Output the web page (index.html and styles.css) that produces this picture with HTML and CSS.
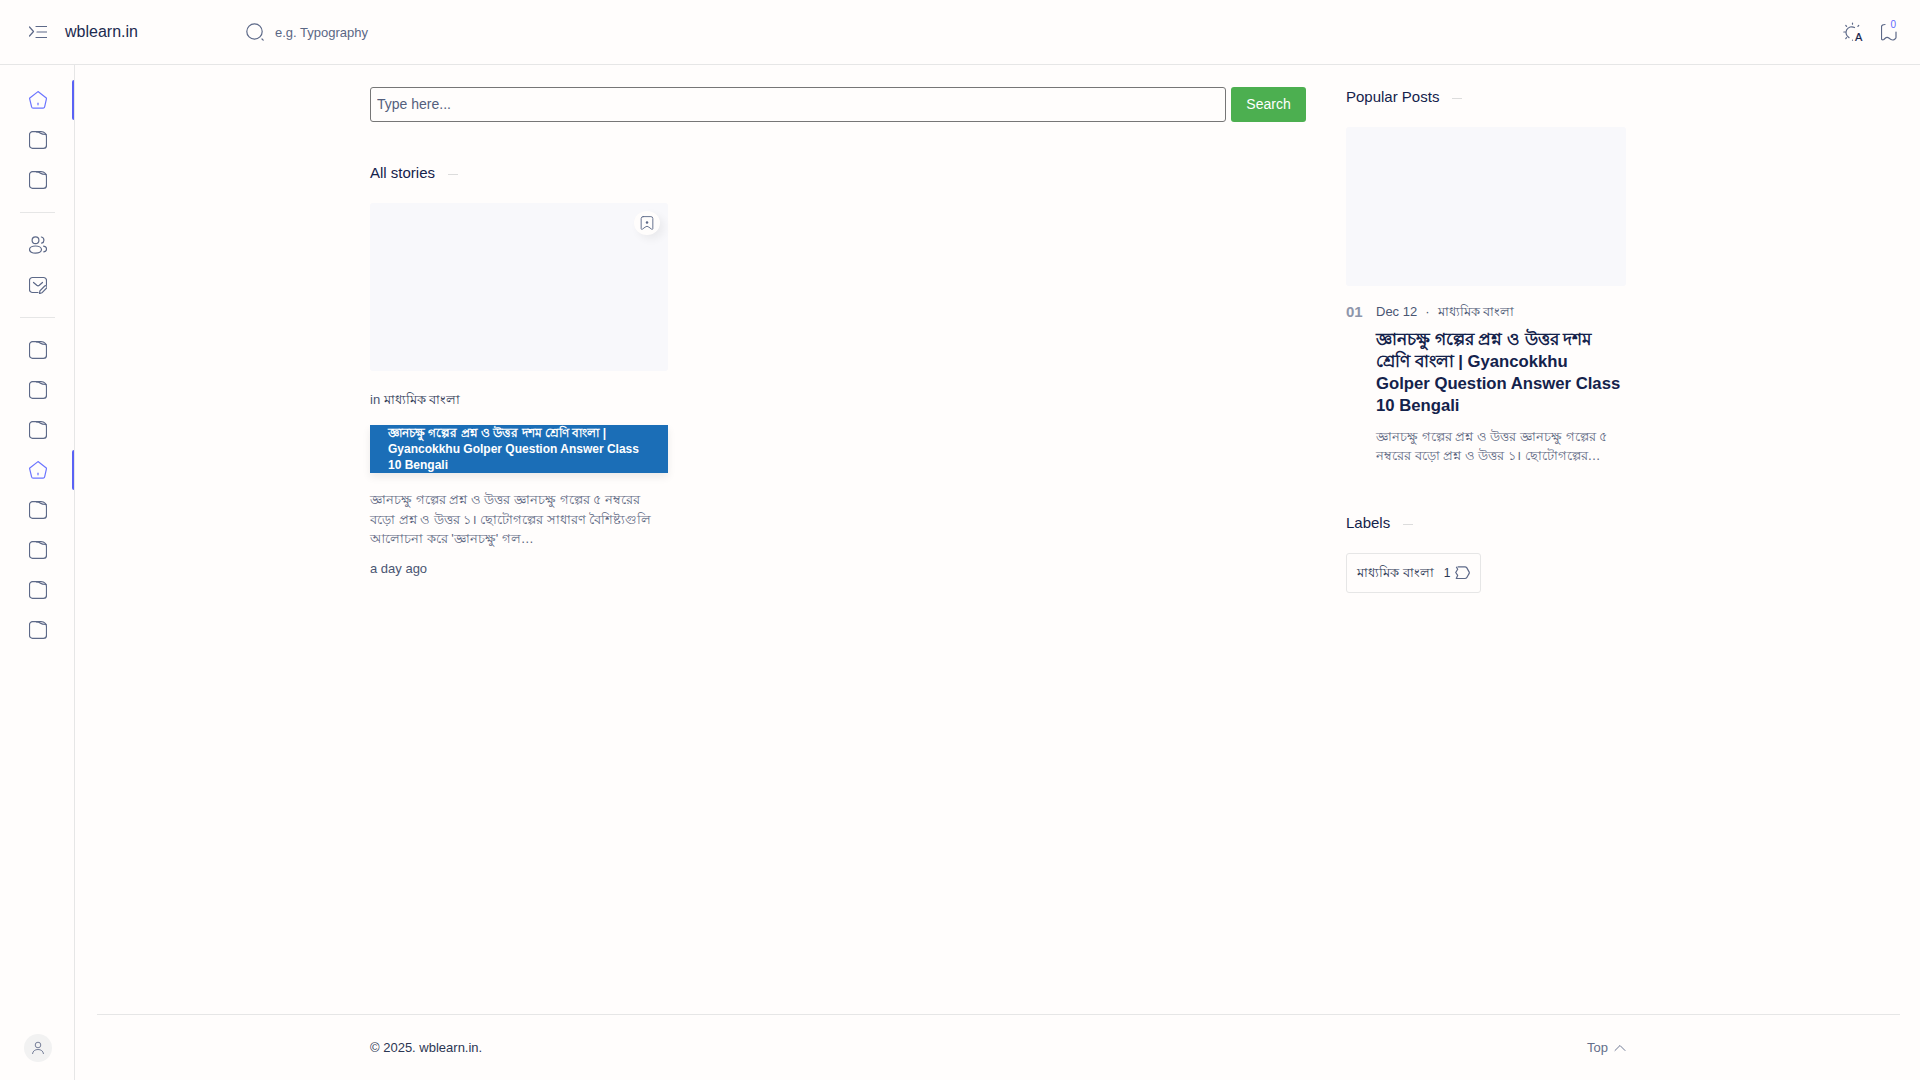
FILE: index.html
```html
<!DOCTYPE html>
<html lang="en">
<head>
  <meta charset="UTF-8">
  <meta name="viewport" content="width=device-width, initial-scale=1.0">
  <title>wblearn.in</title>
  <link rel="stylesheet" href="styles.css">
</head>
<body>

  <svg class="icon-defs" width="0" height="0">
    <symbol id="i-home" viewBox="0 0 18 18"><path d="M9 .6 17.300 7a.6.6 0 0 1 .2.6l-1.800 8a1.600 1.600 0 0 1-1.500 1.600H4.200a1.600 1.600 0 0 1-1.600-1.400L.6 7.600A.6.6 0 0 1 .8 7Z"/><path d="M9 12.200v1.600"/></symbol>
    <symbol id="i-folder" viewBox="0 0 18 18"><path d="M3.500.7H12c2 0 3 .4 4 1.500 1 1 1.500 2 1.500 3.500v8.600a3 3 0 0 1-3 3h-11a3 3 0 0 1-3-3V3.700a3 3 0 0 1 3-3Z"/><path d="M7.500.9c1.800 0 3 .5 4 1.300 1 .9 2.500 1.300 5.700 1.300"/></symbol>
    <symbol id="i-users" viewBox="0 0 18 18"><circle cx="6.500" cy="4.200" r="3.400"/><ellipse cx="6.500" cy="13.600" rx="6" ry="3.600"/><path d="M12.400 1a3.200 3.200 0 0 1 .2 6.200M14.600 10.200c2 .4 3 1.600 3 2.800s-1 2.400-2.800 2.900"/></symbol>
    <symbol id="i-mail" viewBox="0 -1 18 18"><path d="M17.500 8V3.500a3 3 0 0 0-3-3h-11a3 3 0 0 0-3 3v9a3 3 0 0 0 3 3h5.500"/><path d="m4.500 5.500 3.300 2.800a2 2 0 0 0 2.500 0l3.200-2.800"/><path d="m10.500 16.600.4-2.800 4.800-4.800a1.400 1.400 0 0 1 2 2l-4.800 4.800Z"/></symbol>
    <symbol id="i-bookmark" viewBox="0 0 18 18"><path d="M4 .8h10a2.500 2.500 0 0 1 2.500 2.500v13c0 .9-.8 1.200-1.500.7l-3.500-2.600a3.500 3.500 0 0 0-5 0L3 17c-.7.5-1.500.2-1.500-.7v-13A2.500 2.500 0 0 1 4 .8Z"/></symbol>
  </svg>

  <header class="topbar">
    <button class="menu-btn" aria-label="Menu">
      <svg class="icon" width="18" height="18" viewBox="0 0 18 18"><path d="m.5 4 4 4.500-4 4.500M7 3.500h10.500M8 9h9.500M7 14.500h10.500"/></svg>
    </button>
    <a class="logo" href="#">wblearn.in</a>
    <div class="top-search">
      <svg class="icon" width="18" height="18" viewBox="0 0 18 18"><circle cx="8.500" cy="8.500" r="7.700"/><path d="m16 16 1.200 1.200"/></svg>
      <span>e.g. Typography</span>
    </div>
    <div class="top-actions">
      <svg class="icon" width="20" height="20" viewBox="0 0 20 20"><path d="M11.500 5.500A5.500 5.500 0 0 0 6 15.600M9.500 1v1.200M2.800 3.500l.8.800M15.700 3.500l-.8.800M.8 10H2M2.800 16.500l.8-.8M9.500 18v.2" /><text class="theme-a" x="12" y="19">A</text></svg>
      <span class="saved">
        <svg class="icon" width="16" height="18" viewBox="0 0 16 18"><path d="M4 1.500C1.500 1.500.5 2.500.5 4v11.500c0 1.400 1.300 1.700 2.300 1 1.700-1.400 2.800-3.200 5-1.500 2 1.700 3.400 2.700 5 1.700 1.300-.7 2.200-.8 2.200-2.200V9"/></svg>
        <b>0</b>
      </span>
    </div>
  </header>

  <div class="page">
    <aside class="sidenav">
      <nav class="nav-list">
        <a class="nav-item active" href="#"><svg class="icon"><use href="#i-home"/></svg></a>
        <a class="nav-item" href="#"><svg class="icon"><use href="#i-folder"/></svg></a>
        <a class="nav-item" href="#"><svg class="icon"><use href="#i-folder"/></svg></a>
        <hr class="nav-sep">
        <a class="nav-item" href="#"><svg class="icon"><use href="#i-users"/></svg></a>
        <a class="nav-item" href="#"><svg class="icon"><use href="#i-mail"/></svg></a>
        <hr class="nav-sep">
        <a class="nav-item" href="#"><svg class="icon"><use href="#i-folder"/></svg></a>
        <a class="nav-item" href="#"><svg class="icon"><use href="#i-folder"/></svg></a>
        <a class="nav-item" href="#"><svg class="icon"><use href="#i-folder"/></svg></a>
        <a class="nav-item active" href="#"><svg class="icon"><use href="#i-home"/></svg></a>
        <a class="nav-item" href="#"><svg class="icon"><use href="#i-folder"/></svg></a>
        <a class="nav-item" href="#"><svg class="icon"><use href="#i-folder"/></svg></a>
        <a class="nav-item" href="#"><svg class="icon"><use href="#i-folder"/></svg></a>
        <a class="nav-item" href="#"><svg class="icon"><use href="#i-folder"/></svg></a>
      </nav>
      <div class="avatar">
        <svg width="14" height="14" viewBox="0 0 14 14"><circle cx="7" cy="4" r="2.800"/><path d="M1.500 13c.3-3 2.500-4.500 5.500-4.500s5.200 1.500 5.500 4.500"/></svg>
      </div>
    </aside>

    <div class="main">
      <div class="content">
        <section class="stories">
          <form class="search-form">
            <input class="search-input" type="text" placeholder="Type here...">
            <button class="search-btn" type="button">Search</button>
          </form>

          <h2 class="section-title">All stories</h2>

          <article class="card">
            <div class="thumb card-thumb">
              <span class="save-btn"><svg class="icon" width="14" height="14"><use href="#i-bookmark"/><path class="save-dot" d="M7 6.500h.01"/></svg></span>
            </div>
            <div class="card-label">in <a href="#">মাধ্যমিক বাংলা</a></div>
            <h3 class="card-title">জ্ঞানচক্ষু গল্পের প্রশ্ন ও উত্তর দশম শ্রেণি বাংলা | Gyancokkhu Golper Question Answer Class 10 Bengali</h3>
            <p class="card-text">জ্ঞানচক্ষু গল্পের প্রশ্ন ও উত্তর জ্ঞানচক্ষু গল্পের ৫ নম্বরের বড়ো প্রশ্ন ও উত্তর ১। ছোটোগল্পের সাধারণ বৈশিষ্ট্যগুলি আলোচনা করে 'জ্ঞানচক্ষু' গল…</p>
            <time class="card-time">a day ago</time>
          </article>
        </section>

        <aside class="widgets">
          <h2 class="section-title first">Popular Posts</h2>
          <div class="thumb popular-thumb"></div>
          <div class="popular-post">
            <span class="post-num">01</span>
            <div class="post-body">
              <div class="post-meta"><span>Dec 12</span><i>·</i><span>মাধ্যমিক বাংলা</span></div>
              <h3 class="post-title">জ্ঞানচক্ষু গল্পের প্রশ্ন ও উত্তর দশম শ্রেণি বাংলা | Gyancokkhu Golper Question Answer Class 10 Bengali</h3>
              <p class="post-text">জ্ঞানচক্ষু গল্পের প্রশ্ন ও উত্তর জ্ঞানচক্ষু গল্পের ৫ নম্বরের বড়ো প্রশ্ন ও উত্তর ১। ছোটোগল্পের…</p>
            </div>
          </div>

          <h2 class="section-title labels-title">Labels</h2>
          <a class="label-chip" href="#">
            <span>মাধ্যমিক বাংলা</span>
            <em>1</em>
            <svg class="icon" width="15" height="14" viewBox="0 0 15 14"><path d="M3 .8h7c.8 0 1.300.3 1.700.8l2.500 4.500c.2.500.2.800 0 1.300l-2.500 4.300c-.4.600-.9.800-1.700.8H1.300l1.400-3.200L.7 6.500l2-3.200L1.500 1.200"/></svg>
          </a>
        </aside>
      </div>

      <footer class="footer">
        <div class="footer-inner">
          <span>© 2025. wblearn.in.</span>
          <a class="to-top" href="#">Top
            <svg class="icon" width="12" height="8" viewBox="0 0 12 8"><path d="m1 6.500 5-5 5 5"/></svg>
          </a>
        </div>
      </footer>
    </div>
  </div>

</body>
</html>
```

FILE: styles.css
```css
* {
  box-sizing: border-box;
}

body {
  margin: 0;
  height: 100vh;
  display: flex;
  flex-direction: column;
  overflow: hidden;
  background-color: #fffdfc;
  color: #14224b;
  font-family: 'Liberation Sans', 'Noto Sans', sans-serif;
  font-size: 14px;
}

a {
  color: inherit;
  text-decoration: none;
}

.icon-defs {
  position: absolute;
}

.icon {
  width: 18px;
  height: 18px;
  fill: none;
  stroke: #5d6988;
  stroke-width: 1.2;
  stroke-linecap: round;
  stroke-linejoin: round;
}

/* Top bar */
.topbar {
  height: 65px;
  flex: none;
  display: flex;
  align-items: center;
  padding: 0 23px 0 29px;
  border-bottom: 1px solid #e6e6e6;
}

.menu-btn {
  width: 18px;
  height: 18px;
  padding: 0;
  border: 0;
  background: none;
  margin-top: -1px;
}

.logo {
  margin-left: 18px;
  width: 181px;
  font-size: 16px;
  color: #1c2a50;
  margin-top: -1px;
}

.top-search {
  display: flex;
  align-items: center;
  gap: 11px;
  font-size: 13px;
  color: #5b6785;
}

.top-actions {
  margin-left: auto;
  display: flex;
  align-items: center;
  gap: 18px;
}

.top-actions > .icon {
  width: 20px;
  height: 20px;
}

.theme-a {
  font-size: 11px;
  font-weight: 400;
  fill: #14224b;
  stroke: #14224b;
  stroke-width: 0.2;
}

.saved {
  position: relative;
  display: flex;
}

.saved .icon {
  width: 16px;
  height: 18px;
}

.saved b {
  position: absolute;
  top: -4px;
  right: 1px;
  font-size: 10px;
  font-weight: 400;
  color: #5f6bff;
}

/* Left rail */
.page {
  flex: 1;
  min-height: 0;
  display: flex;
}

.sidenav {
  width: 75px;
  flex: none;
  display: flex;
  flex-direction: column;
  justify-content: space-between;
  border-right: 1px solid #e6e6e6;
  padding: 15px 0 18px;
}

.nav-item {
  position: relative;
  display: flex;
  align-items: center;
  height: 40px;
  padding-left: 29px;
}

.nav-item.active .icon {
  stroke: #6b74ff;
}

.nav-item.active::after {
  content: "";
  position: absolute;
  right: 0;
  top: 0;
  width: 2px;
  height: 40px;
  border-radius: 2px 0 0 2px;
  background: #5a62f5;
}

.nav-sep {
  width: 35px;
  height: 1px;
  margin: 12px 0 12px 20px;
  border: 0;
  background: #e6e6e6;
}

.avatar {
  width: 28px;
  height: 28px;
  margin-left: 24px;
  border-radius: 50%;
  background: #f2f2f2;
  display: flex;
  align-items: center;
  justify-content: center;
}

.avatar svg {
  fill: none;
  stroke: #767f99;
  stroke-width: 1;
}

/* Main area */
.main {
  flex: 1;
  min-width: 0;
  display: flex;
  flex-direction: column;
  justify-content: space-between;
}

.content {
  display: flex;
  gap: 40px;
  padding: 22px 0 0 295px;
}

.stories {
  width: 936px;
}

.search-form {
  display: flex;
  gap: 5px;
  height: 35px;
}

.search-input {
  flex: 1;
  min-width: 0;
  padding: 0 6px 2px;
  border: 1px solid #767676;
  border-radius: 3px;
  background: none;
  font: 14px 'Liberation Sans', sans-serif;
}

.search-input::placeholder {
  color: #545f7d;
  opacity: 1;
}

.search-btn {
  width: 75px;
  padding: 0 0 2px;
  border: 0;
  border-radius: 3px;
  background: #4caf50;
  color: #fff;
  font: 14px 'Liberation Sans', sans-serif;
}

.section-title {
  display: flex;
  align-items: center;
  margin: 0;
  font-size: 15px;
  font-weight: 400;
  line-height: 20px;
}

.section-title::after {
  content: "";
  width: 10px;
  height: 1px;
  margin: 2px 0 0 13px;
  background: #dcdcdc;
}

.stories .section-title {
  margin-top: 41px;
}

.thumb {
  background: #f8f8fb;
  border-radius: 3px;
}

/* Story card */
.card {
  width: 298px;
  margin-top: 20px;
}

.card-thumb {
  position: relative;
  height: 168px;
}

.save-btn {
  position: absolute;
  top: 8px;
  right: 8px;
  width: 26px;
  height: 24px;
  border-radius: 50%;
  background: #fffdfc;
  box-shadow: 4px 4px 8px rgba(0, 0, 0, 0.06);
  display: flex;
  align-items: center;
  justify-content: center;
}

.save-btn .icon {
  width: 14px;
  height: 14px;
}

.save-dot {
  stroke-width: 2.5;
}

.card-label {
  margin-top: 19px;
  font-size: 13px;
  line-height: 20px;
  color: #4a5572;
}

.card-label a {
  font-size: 13px;
  color: #2c3653;
}

.card-title {
  margin: 15px 0 0;
  padding: 0 18px;
  height: 48px;
  background: #1b6eb7;
  box-shadow: 0 4px 8px rgba(0, 0, 0, 0.08);
  color: #fff;
  font-size: 12px;
  font-weight: 700;
  line-height: 16px;
  overflow: hidden;
}

.card-text {
  margin: 17px 0 0;
  font-size: 13px;
  line-height: 19.5px;
  color: #5c6680;
}

.card-time {
  display: block;
  margin-top: 12px;
  font-size: 13px;
  line-height: 16px;
  color: #4a5572;
}

/* Right column */
.widgets {
  width: 280px;
}

.popular-thumb {
  height: 159px;
  margin-top: 20px;
}

.popular-post {
  display: flex;
  margin-top: 16px;
}

.post-num {
  width: 30px;
  flex: none;
  font-size: 15px;
  font-weight: 700;
  line-height: 20px;
  color: #8e96ab;
}

.post-meta {
  display: flex;
  align-items: center;
  gap: 8px;
  font-size: 13px;
  line-height: 20px;
  color: #4a5572;
}

.post-meta i {
  font-style: normal;
}

.post-title {
  margin: 7px 0 0;
  font-size: 16.7px;
  font-weight: 700;
  line-height: 22px;
}

.post-text {
  margin: 10px 0 0;
  font-size: 13px;
  line-height: 19px;
  color: #5c6680;
}

.labels-title {
  margin-top: 48px;
}

.label-chip {
  display: inline-flex;
  align-items: center;
  height: 40px;
  margin-top: 20px;
  padding: 0 10px;
  border: 1px solid #e6e6e6;
  border-radius: 3px;
  font-size: 13px;
  color: #2c3653;
}

.label-chip em {
  margin-left: 10px;
  font-size: 12px;
  font-style: normal;
}

.label-chip .icon {
  width: 15px;
  height: 14px;
  margin-left: 5px;
}

/* Footer */
.footer {
  margin: 0 20px 0 22px;
  height: 66px;
  border-top: 1px solid #e6e6e6;
}

.footer-inner {
  display: flex;
  justify-content: space-between;
  align-items: center;
  width: 1256px;
  margin-left: 273px;
  height: 65px;
  font-size: 13px;
  color: #2c3653;
}

.to-top {
  display: flex;
  align-items: center;
  gap: 6px;
  color: #646e8a;
}

.to-top .icon {
  width: 12px;
  height: 8px;
  stroke-width: 0.9;
}
```
